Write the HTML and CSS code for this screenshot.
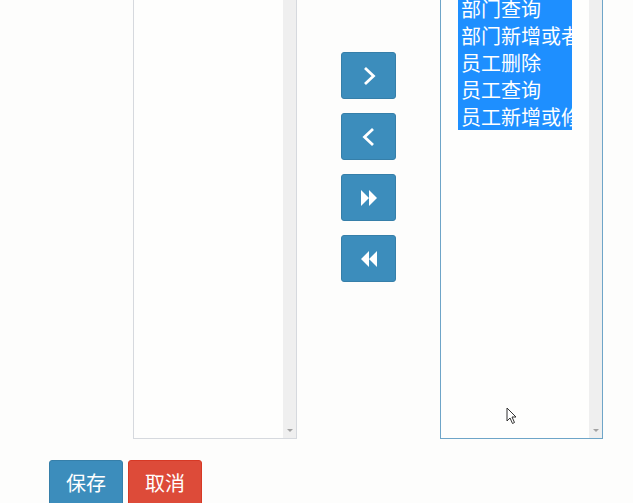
FILE: index.html
```html
<!DOCTYPE html>
<html>
<head>
<meta charset="utf-8">
<link rel="stylesheet" href="styles.css">
</head>
<body>
<div class="page">
  <div class="transfer">
    <div class="listbox">
      <div class="list-body"></div>
      <div class="scrollbar"><span class="arrow"></span></div>
    </div>
    <div class="actions">
      <button class="move-btn" type="button" aria-label="右移">
        <svg width="14" height="20" viewBox="0 0 14 20"><path d="M3 2 L11.5 10 L3 18" fill="none" stroke="#fff" stroke-width="2.8" stroke-linejoin="miter"/></svg>
      </button>
      <button class="move-btn" type="button" aria-label="左移">
        <svg width="14" height="20" viewBox="0 0 14 20"><path d="M11 2 L2.5 10 L11 18" fill="none" stroke="#fff" stroke-width="2.8" stroke-linejoin="miter"/></svg>
      </button>
      <button class="move-btn" type="button" aria-label="全部右移">
        <svg width="18" height="18" viewBox="0 0 18 18"><path d="M1 1 L9 9 L1 17 Z M9 1 L17 9 L9 17 Z" fill="#fff"/></svg>
      </button>
      <button class="move-btn" type="button" aria-label="全部左移">
        <svg width="18" height="18" viewBox="0 0 18 18"><path d="M9 1 L1 9 L9 17 Z M17 1 L9 9 L17 17 Z" fill="#fff"/></svg>
      </button>
    </div>
    <div class="listbox focused">
      <div class="list-body">
        <ul class="options">
          <li>部门查询</li>
          <li>部门新增或者修改</li>
          <li>员工删除</li>
          <li>员工查询</li>
          <li>员工新增或修改</li>
        </ul>
        <svg class="cursor" width="12" height="18" viewBox="0 0 12 18"><path d="M1 1 L1 14 L4 11 L6.5 16.5 L8.5 15.5 L6 10 L10 10 Z" fill="#fff" stroke="#333" stroke-width="1"/></svg>
      </div>
      <div class="scrollbar"><span class="arrow"></span></div>
    </div>
  </div>
  <div class="form-actions">
    <button class="btn btn-primary" type="button">保存</button>
    <button class="btn btn-danger" type="button">取消</button>
  </div>
</div>
</body>
</html>
```

FILE: styles.css
```css
html, body {
  margin: 0;
  padding: 0;
  background: #fdfdfc;
  font-family: "Noto Sans CJK SC", "Noto Sans", sans-serif;
  overflow: hidden;
}

.page {
  width: 633px;
  height: 503px;
}

.transfer {
  display: flex;
  align-items: flex-start;
  padding-left: 133px;
  height: 439px;
}

.listbox {
  box-sizing: border-box;
  width: 164px;
  height: 439px;
  border: 1px solid #d6d9de;
  border-top: none;
  background: #fefefd;
  display: flex;
}

.listbox.focused {
  width: 163px;
  border-color: #6ea5c8;
}

.list-body {
  flex: 1;
  position: relative;
  overflow: hidden;
}

.scrollbar {
  width: 13px;
  background: #efefef;
  display: flex;
  flex-direction: column;
  justify-content: flex-end;
  align-items: center;
}

.arrow {
  width: 0;
  height: 0;
  border-left: 3px solid transparent;
  border-right: 3px solid transparent;
  border-top: 3px solid #a3a3a3;
  margin-bottom: 6px;
}

.actions {
  width: 143px;
  display: flex;
  flex-direction: column;
  align-items: center;
  gap: 14px;
  padding-top: 52px;
}

.move-btn {
  width: 55px;
  height: 47px;
  background: #3c8dbc;
  border: 1px solid #367fa9;
  border-radius: 3px;
  display: flex;
  align-items: center;
  justify-content: center;
  padding: 0;
}

.options {
  list-style: none;
  margin: -5px 0 0 17px;
  padding: 0;
  width: 114px;
  background: #1e8fff;
}

.options li {
  color: #fff;
  font-size: 20px;
  line-height: 27px;
  height: 27px;
  padding-left: 3px;
  white-space: nowrap;
  overflow: hidden;
}

.cursor {
  position: absolute;
  left: 65px;
  top: 407px;
}

.form-actions {
  display: flex;
  gap: 5px;
  padding: 21px 0 0 49px;
}

.btn {
  width: 74px;
  height: 46px;
  border-radius: 3px;
  color: #fff;
  font-family: "Noto Sans CJK SC", sans-serif;
  font-size: 20px;
  padding: 0;
  line-height: 44px;
  border: 1px solid transparent;
}

.btn-primary {
  background: #3c8dbc;
  border-color: #367fa9;
}

.btn-danger {
  background: #dd4b39;
  border-color: #d73925;
}
```
